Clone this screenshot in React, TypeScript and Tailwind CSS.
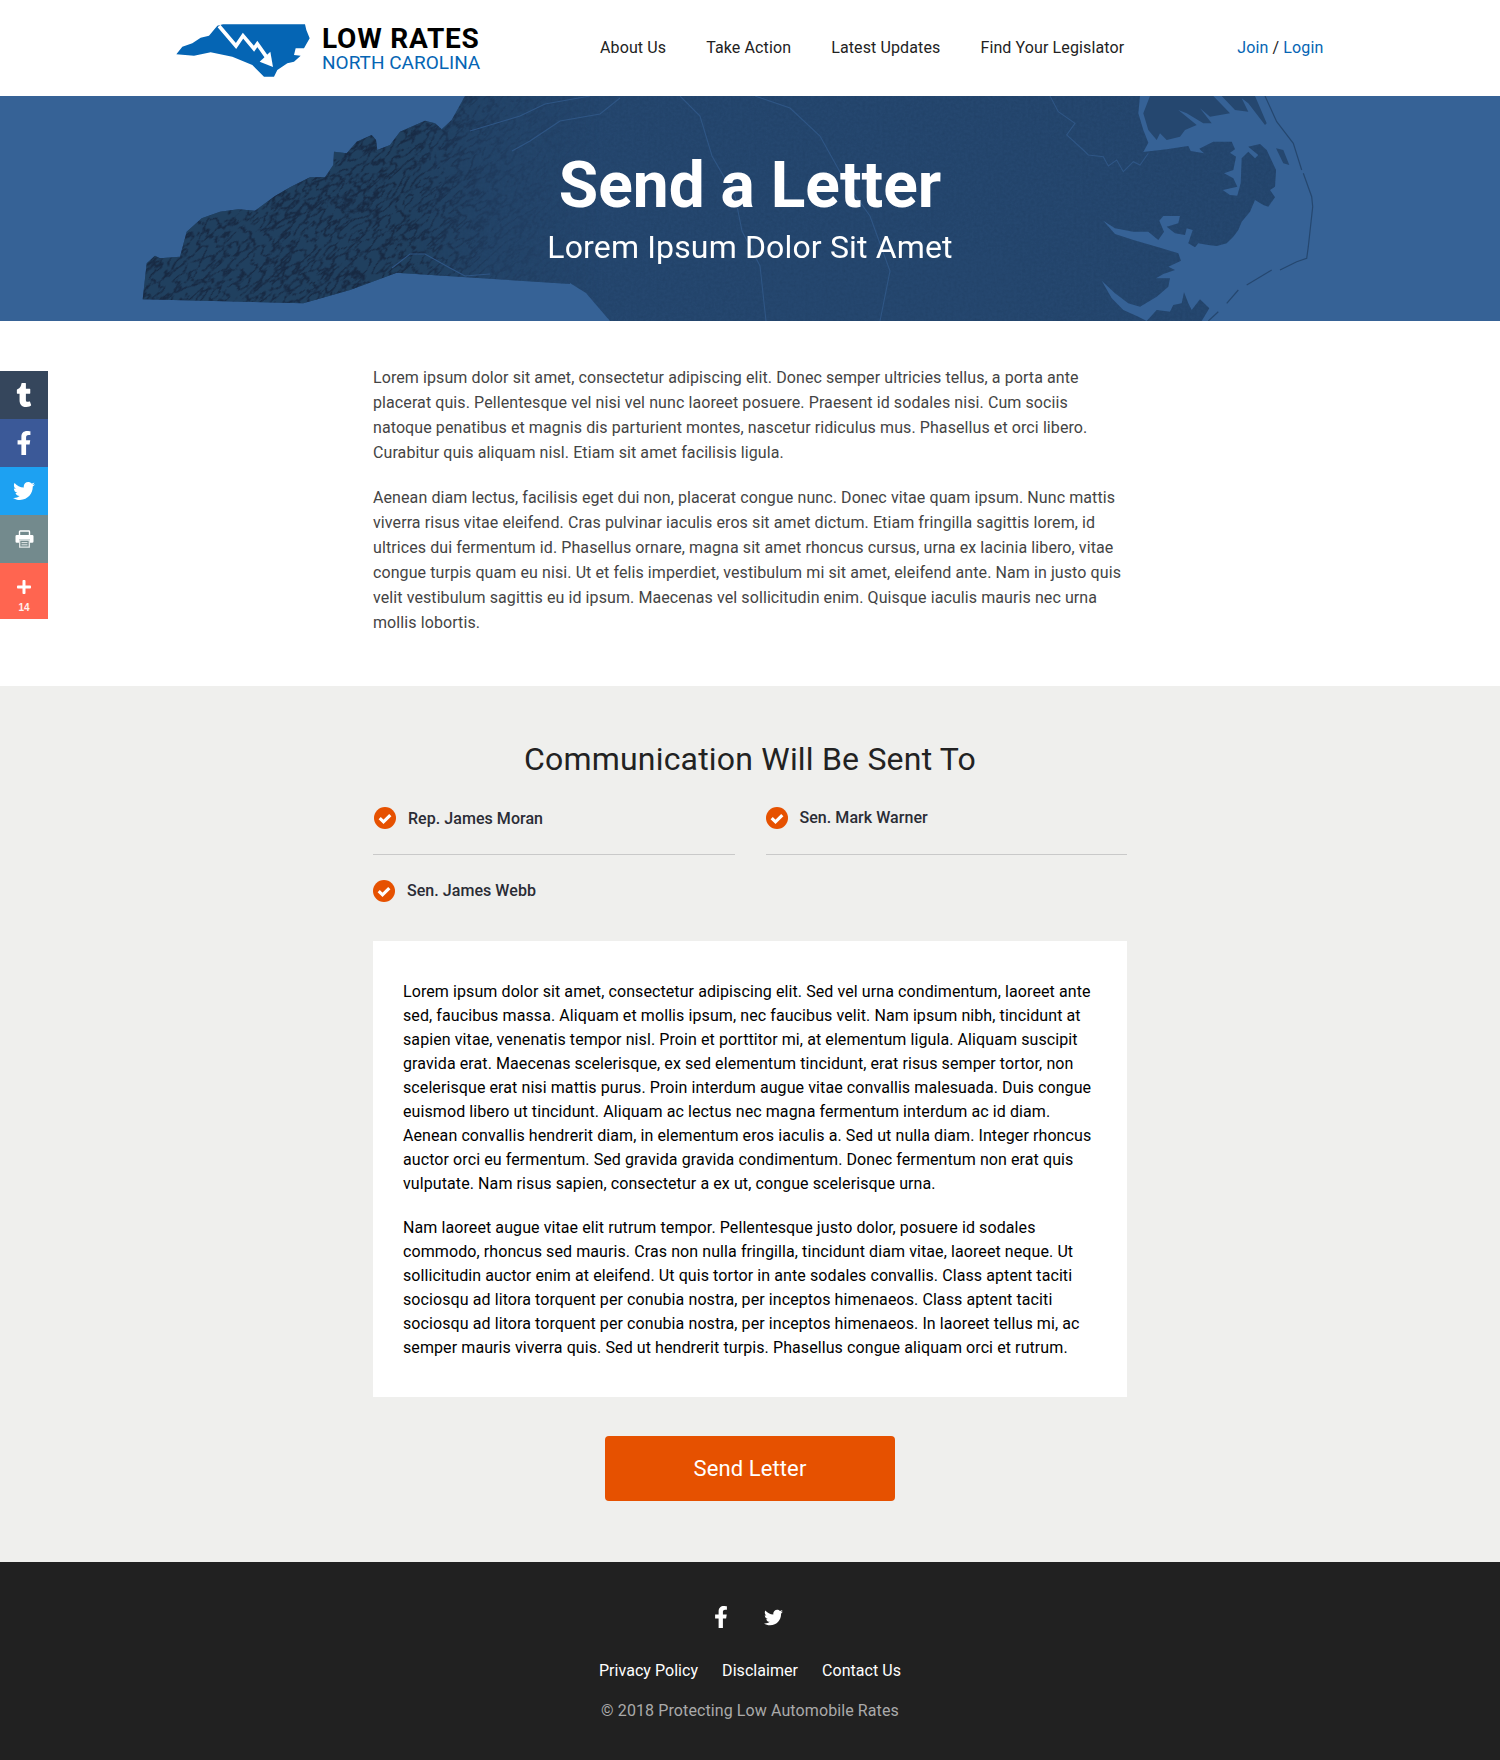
import { FaFacebookF, FaPlus, FaTumblr, FaTwitter } from "react-icons/fa";

const NAV = ["About Us", "Take Action", "Latest Updates", "Find Your Legislator"];
const FOOTER_LINKS = ["Privacy Policy", "Disclaimer", "Contact Us"];

const LAND = "#25476f";

// traced from the picture: p7 = west crop, p6 = east crop, both 3x
const p7 = (x: number, y: number) => `${(130 + x / 3).toFixed(1)} ${(y / 3 - 6).toFixed(1)}`;
const p6 = (x: number, y: number) => `${(1000 + x / 3).toFixed(1)} ${(y / 3 - 6).toFixed(1)}`;
const toD = (pts: string[], close = true) => "M" + pts.join(" L") + (close ? " Z" : "");
const east = (list: number[][]) => list.map(([x, y]) => p6(x, y));

const WEST = [
  [38, 628], [520, 640], [660, 600], [800, 548], [1320, 582],
].map(([x, y]) => p7(x, y));
const SOUTH_EDGE = ["570 187", "586 197", "610 225"];
const WEST_TOP = [
  [1005, 18], [965, 90], [935, 118], [915, 100], [885, 92], [810, 125], [780, 165], [742, 180], [738, 150],
  [725, 135], [680, 155], [650, 190], [612, 185], [610, 225], [585, 262], [540, 262], [480, 292], [435, 318],
  [375, 362], [325, 358], [270, 365], [215, 385], [170, 425], [150, 500], [90, 505], [75, 497], [50, 520],
].map(([x, y]) => p7(x, y));

const COAST = east([
  [420, 18], [415, 70], [430, 120], [445, 158], [430, 186], [500, 178], [565, 168], [572, 183], [612, 190],
  [598, 176], [640, 155], [695, 155], [705, 178], [690, 188], [708, 200], [700, 240], [672, 250], [700, 265],
  [712, 290], [668, 300], [690, 315], [712, 317], [722, 280], [725, 205], [745, 185], [765, 205], [775, 195],
  [745, 170], [780, 162], [800, 180], [828, 240], [825, 290], [810, 300], [825, 322], [805, 350], [790, 345],
  [765, 330], [750, 365], [725, 395], [715, 420], [700, 440], [680, 460], [650, 468], [625, 465], [595, 460],
  [585, 472], [565, 460], [578, 420], [560, 415], [555, 435], [525, 430], [500, 410], [535, 400], [540, 378],
  [490, 378], [478, 392], [492, 425], [475, 450], [445, 425], [400, 425], [345, 415], [310, 392], [345, 432],
  [400, 450], [470, 470], [535, 490], [543, 512], [505, 530], [525, 540], [490, 552], [468, 565], [510, 565],
  [505, 590], [470, 620], [420, 650], [385, 640], [345, 610], [305, 572], [335, 625], [370, 660], [415, 680],
  [440, 693], [470, 660], [510, 665], [520, 645], [545, 640], [552, 607], [565, 640], [575, 660], [600, 628],
  [628, 655], [605, 693],
]);

// west edge -> south border -> along the bottom -> up the coast backwards -> top of the mountains
const MAIN_D = toD([...WEST, ...SOUTH_EDGE, p6(605, 693), ...COAST.slice().reverse(), ...WEST_TOP]);

const NORTH_A = toD(east([
  [450, 18], [430, 70], [445, 120], [470, 150], [480, 130], [500, 150], [540, 140], [555, 120], [590, 105],
  [535, 60], [560, 70], [610, 100], [635, 100], [600, 55], [630, 80], [690, 70], [640, 18],
]));
const NORTH_B = toD(east([[665, 18], [705, 60], [745, 65], [725, 25], [745, 40], [795, 105], [800, 100], [765, 18]]));
const ISLAND = toD(east([[828, 175], [850, 180], [868, 225], [850, 220]]));

const BARRIER = [
  east([[795, 18], [830, 95], [880, 160], [905, 240]]),
  east([[910, 250], [935, 320], [938, 350], [925, 470], [920, 505], [890, 515], [840, 540]]),
  east([[815, 540], [740, 585]]),
  east([[715, 600], [680, 640]]),
  east([[655, 665], [625, 693]]),
];

const RIVERS = [
  east([[150, 18], [175, 65], [225, 100], [200, 135], [250, 180], [265, 195], [310, 200], [325, 228], [350, 210], [370, 245], [400, 215], [420, 225], [445, 190]]),
  ["470 35", "520 20", "545 8", "590 0"],
  ["512 55", "530 45", "560 25", "600 18", "620 2"],
  ["392 172", "410 158", "425 158", "450 172", "465 180", "490 178"],
  ["680 0", "700 20", "712 60", "735 100", "742 135", "760 170", "766 225"],
  ["755 0", "790 12", "820 40", "845 85", "870 120", "890 175", "880 225"],
];

function HeroMap() {
  return (
    <svg viewBox="0 0 1500 225" className="absolute inset-0 h-full w-full" aria-hidden="true">
      <defs>
        <filter id="ridges" x="0" y="0" width="100%" height="100%" colorInterpolationFilters="sRGB">
          <feTurbulence type="turbulence" baseFrequency="0.07 0.16" numOctaves="3" seed="11" />
          <feColorMatrix values="0 0 0 0 0.09  0 0 0 0 0.16  0 0 0 0 0.26  0 0 0 -5 1.5" />
        </filter>
        <filter id="grain" x="0" y="0" width="100%" height="100%" colorInterpolationFilters="sRGB">
          <feTurbulence type="fractalNoise" baseFrequency="0.35" numOctaves="3" seed="3" />
          <feColorMatrix values="0 0 0 0 0.11  0 0 0 0 0.22  0 0 0 0 0.35  1 1 0 0 -0.8" />
        </filter>
        <linearGradient id="fade" x1="0" x2="1" y1="0" y2="0">
          <stop offset="0.27" stopColor="white" />
          <stop offset="0.33" stopColor="white" stopOpacity="0.35" />
          <stop offset="0.4" stopColor="white" stopOpacity="0" />
        </linearGradient>
        <mask id="west-fade">
          <rect width="1500" height="225" fill="url(#fade)" />
        </mask>
        <clipPath id="land-clip">
          <path d={MAIN_D} />
        </clipPath>
      </defs>
      <path d={MAIN_D} fill={LAND} />
      <path d={NORTH_A} fill={LAND} />
      <path d={NORTH_B} fill={LAND} />
      <path d={ISLAND} fill={LAND} />
      {BARRIER.map((pts, i) => (
        <path key={i} d={toD(pts, false)} fill="none" stroke={LAND} strokeWidth="1.2" />
      ))}
      <g clipPath="url(#land-clip)">
        <rect width="1500" height="225" filter="url(#grain)" opacity="0.35" />
        <g mask="url(#west-fade)">
          <rect width="1500" height="225" fill="#20405f" />
          <rect x="-300" y="-500" width="1300" height="1200" transform="rotate(-42 300 110)" filter="url(#ridges)" />
        </g>
      </g>
      {RIVERS.map((pts, i) => (
        <path key={i} d={toD(pts, false)} fill="none" stroke="#2f5685" strokeWidth="1.1" />
      ))}
    </svg>
  );
}

function Logo() {
  return (
    <svg viewBox="0 0 450 210" className="mt-[3px] h-[70px] w-[150px]" aria-hidden="true">
      <path
        d="M22 118 L40 95 L70 85 L95 68 L120 62 L145 32 L162 28 L408 28 L412 45 L422 70 L405 100 L380 100 L375 120 L395 122 L375 140 L355 145 L325 165 L315 185 L285 185 L250 150 L190 125 L125 112 L75 122 Z"
        fill="#0565b4"
      />
      <path d="M150 33 L201 93 L222 62 L255 101 L265 87 L294 128" fill="none" stroke="#fff" strokeWidth="11" />
      <path d="M272 140 L304 110 L312 156 Z" fill="#fff" />
    </svg>
  );
}

function PrintIcon() {
  return (
    <svg viewBox="0 0 19 18" className="h-[18px] w-[19px]" aria-hidden="true">
      <path d="M4.5 5 V1.7 Q4.5 1 5.2 1 H13.8 Q14.5 1 14.5 1.7 V5" fill="none" stroke="#fff" strokeWidth="1.4" />
      <path d="M1.8 5 H17.2 Q18.5 5 18.5 6.3 V11.5 Q18.5 12.8 17.2 12.8 H15 V9.5 H4 V12.8 H1.8 Q0.5 12.8 0.5 11.5 V6.3 Q0.5 5 1.8 5 Z" fill="#fff" />
      <path d="M4.7 10.2 H14.3 V17.2 H4.7 Z" fill="none" stroke="#e4e9e9" strokeWidth="1.3" />
      <path d="M6.5 12.6 H12.5 M6.5 14.8 H12.5" stroke="#e4e9e9" strokeWidth="1" />
    </svg>
  );
}

function Check() {
  return (
    <svg viewBox="0 0 22 22" className="h-[22px] w-[22px] shrink-0" aria-hidden="true">
      <circle cx="11" cy="11" r="11" fill="#e65100" />
      <path d="M5.7 11.2 L9.5 14.8 L16.3 8.2" fill="none" stroke="#fff" strokeWidth="3.2" />
    </svg>
  );
}

function Recipient({ name, className, nudge }: { name: string; className: string; nudge?: string }) {
  return (
    <div className={className}>
      <Check />
      <span className={`text-base font-medium tracking-[0.05px] text-[#2a2c35] ${nudge ?? ""}`}>{name}</span>
    </div>
  );
}

export default function App() {
  return (
    <div className="relative min-h-[1760px] bg-white font-['Roboto',sans-serif] text-[#333]">
      <aside className="absolute left-0 top-[371px] z-10 flex w-12 flex-col text-white">
        <a href="#" className="flex h-12 items-center justify-center bg-[#35465c] text-[24px]"><FaTumblr /></a>
        <a href="#" className="flex h-12 items-center justify-center bg-[#3b5998] text-[24px]"><FaFacebookF /></a>
        <a href="#" className="flex h-12 items-center justify-center bg-[#1da1f2] text-[22px]"><FaTwitter /></a>
        <a href="#" className="flex h-12 items-center justify-center bg-[#738a8d]"><PrintIcon /></a>
        <a href="#" className="flex h-14 flex-col items-center bg-[#ff6550] pt-[16px] text-[16px]">
          <FaPlus />
          <span className="mt-[8px] font-['Liberation_Sans',sans-serif] text-[10px] font-bold leading-none text-white/90">14</span>
        </a>
      </aside>

      <header className="flex h-24 items-center bg-white pl-[169px]">
        <Logo />
        <div className="ml-[3px] flex w-[158px] flex-col whitespace-nowrap">
          <span className="text-[28px] font-bold leading-[30px] tracking-[0.8px] text-black">LOW RATES</span>
          <span className="text-[19px] leading-[18px] text-[#0565b4]">NORTH CAROLINA</span>
        </div>
        <nav className="ml-[120px] flex gap-10 tracking-[0.12px]">
          {NAV.map((item) => (
            <a key={item} href="#" className="text-base text-[#222]">{item}</a>
          ))}
        </nav>
        <div className="ml-[113px] text-base tracking-[0.12px] text-[#222]">
          <a href="#" className="text-[#0565b4]">Join</a> / <a href="#" className="text-[#0565b4]">Login</a>
        </div>
      </header>

      <section className="relative flex h-[225px] flex-col items-center overflow-hidden bg-[#366296] pt-[46px] text-white">
        <HeroMap />
        <h1 className="relative text-[64px] font-bold leading-[88px]">Send a Letter</h1>
        <p className="relative mt-[-3px] text-[32px] leading-[40px] tracking-[0.15px]">Lorem Ipsum Dolor Sit Amet</p>
      </section>

      <section className="mx-auto w-[754px] pb-[51px] pt-[44px] text-base leading-[25px] tracking-[0.09px] text-[#444]">
        <p>
          Lorem ipsum dolor sit amet, consectetur adipiscing elit. Donec semper ultricies tellus, a porta ante placerat quis. Pellentesque vel nisi vel nunc laoreet posuere. Praesent id sodales nisi. Cum sociis natoque penatibus et magnis dis parturient montes, nascetur ridiculus mus. Phasellus et orci libero. Curabitur quis aliquam nisl. Etiam sit amet facilisis ligula.
        </p>
        <p className="mt-5">
          Aenean diam lectus, facilisis eget dui non, placerat congue nunc. Donec vitae quam ipsum. Nunc mattis viverra risus vitae eleifend. Cras pulvinar iaculis eros sit amet dictum. Etiam fringilla sagittis lorem, id ultrices dui fermentum id. Phasellus ornare, magna sit amet rhoncus cursus, urna ex lacinia libero, vitae congue turpis quam eu nisi. Ut et felis imperdiet, vestibulum mi sit amet, eleifend ante. Nam in justo quis velit vestibulum sagittis eu id ipsum. Maecenas vel sollicitudin enim. Quisque iaculis mauris nec urna mollis lobortis.
        </p>
      </section>

      <section className="bg-[#efefed] pb-[61px] pt-[50px]">
        <div className="mx-auto w-[754px]">
          <h2 className="text-center text-[32px] leading-[46px] tracking-[0.2px] text-[#222]">Communication Will Be Sent To</h2>
          <div className="mt-[10px] grid grid-cols-2 gap-x-[31px]">
            <Recipient name="Rep. James Moran" nudge="mt-[2px]" className="flex h-[63px] items-center gap-3 border-b border-[#c9c9c9] pb-[10px] pl-px" />
            <Recipient name="Sen. Mark Warner" nudge="mt-[-1px]" className="flex h-[63px] items-center gap-3 border-b border-[#c9c9c9] pb-[10px]" />
            <Recipient name="Sen. James Webb" className="flex h-[72px] items-center gap-3" />
          </div>
          <div className="mt-[14px] bg-white px-[30px] pb-[37px] pt-[39px] text-base leading-[24px] tracking-[0.09px] text-black">
            <p>
              Lorem ipsum dolor sit amet, consectetur adipiscing elit. Sed vel urna condimentum, laoreet ante sed, faucibus massa. Aliquam et mollis ipsum, nec faucibus velit. Nam ipsum nibh, tincidunt at sapien vitae, venenatis tempor nisl. Proin et porttitor mi, at elementum ligula. Aliquam suscipit gravida erat. Maecenas scelerisque, ex sed elementum tincidunt, erat risus semper tortor, non scelerisque erat nisi mattis purus. Proin interdum augue vitae convallis malesuada. Duis congue euismod libero ut tincidunt. Aliquam ac lectus nec magna fermentum interdum ac id diam. Aenean convallis hendrerit diam, in elementum eros iaculis a. Sed ut nulla diam. Integer rhoncus auctor orci eu fermentum. Sed gravida gravida condimentum. Donec fermentum non erat quis vulputate. Nam risus sapien, consectetur a ex ut, congue scelerisque urna.
            </p>
            <p className="mt-5">
              Nam laoreet augue vitae elit rutrum tempor. Pellentesque justo dolor, posuere id sodales commodo, rhoncus sed mauris. Cras non nulla fringilla, tincidunt diam vitae, laoreet neque. Ut sollicitudin auctor enim at eleifend. Ut quis tortor in ante sodales convallis. Class aptent taciti sociosqu ad litora torquent per conubia nostra, per inceptos himenaeos. Class aptent taciti sociosqu ad litora torquent per conubia nostra, per inceptos himenaeos. In laoreet tellus mi, ac semper mauris viverra quis. Sed ut hendrerit turpis. Phasellus congue aliquam orci et rutrum.
            </p>
          </div>
          <button className="mx-auto mt-[39px] block h-[65px] w-[290px] rounded bg-[#e65100] text-[22px] tracking-[0.1px] text-white">Send Letter</button>
        </div>
      </section>

      <footer className="flex h-[198px] flex-col items-center bg-[#212121] pt-[44px] text-white">
        <div className="flex h-[22px] items-center gap-8 pr-[7px]">
          <FaFacebookF className="text-[22px]" />
          <FaTwitter className="text-[19px]" />
        </div>
        <nav className="mt-[31px] flex gap-6 text-base leading-6 tracking-[0.05px]">
          {FOOTER_LINKS.map((item) => (
            <a key={item} href="#">{item}</a>
          ))}
        </nav>
        <p className="mt-4 text-base leading-6 tracking-[0.1px] text-[#aaa]">© 2018 Protecting Low Automobile Rates</p>
      </footer>
    </div>
  );
}
